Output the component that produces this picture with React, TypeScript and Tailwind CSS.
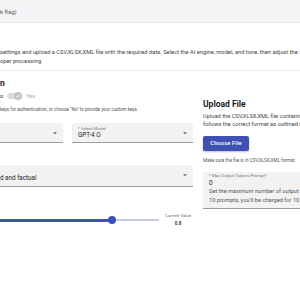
const ArrowDrop = () => (
  <svg viewBox="0 0 24 24" className="w-[10px] h-[10px] fill-[#6b6b6b]">
    <path d="M7 10l5 5 5-5z" />
  </svg>
);

const Toggle = () => (
  <div className="relative w-[15px] h-[6px] rounded-full bg-[#dcdcdc]">
    <div className="absolute -top-[1px] right-0 w-[8px] h-[8px] rounded-full bg-[#c4c4c4] flex items-center justify-center">
      <svg viewBox="0 0 24 24" className="w-[6px] h-[6px] fill-none stroke-white stroke-[3]">
        <path d="M5 12l5 5 9-10" />
      </svg>
    </div>
  </div>
);

export default function App() {
  return (
    <div className="w-[300px] h-[300px] overflow-hidden bg-white font-['Roboto',sans-serif] text-[#222]">
      <header className="h-[23px] bg-[#f5f5f7] border-b border-[#ececec] flex items-center text-[6px] text-[#555] whitespace-nowrap">
        k flag)
      </header>

      <section className="h-[48px] border-b border-[#ededed] pt-[25px] text-[5.75px] leading-[9px] text-[#444] whitespace-nowrap">
        <p>
          settings and upload a CSV,XLSX,XML file with the required data. Select the AI engine, model, and tone, then
          adjust the settings
        </p>
        <p>oper processing.</p>
      </section>

      <div className="flex">
        <div className="w-[193px] shrink-0">
          <h2 className="mt-[7px] text-[8.5px] leading-[10px] font-bold">n</h2>
          <div className="mt-[3px] h-[10px] flex items-center gap-[3px] text-[5.5px]">
            <span className="text-[#333]">s:</span>
            <Toggle />
            <span className="text-[#aaa] ml-[1px]">Yes</span>
          </div>
          <p className="mt-[5px] text-[4.6px] leading-[7px] text-[#555] whitespace-nowrap">
            keys for authentication, or choose "No" to provide your custom keys.
          </p>

          <div className="mt-[10px] flex gap-[9px]">
            <div className="w-[63px] h-[20px] bg-[#f2f2f2] border-b border-[#9e9e9e] rounded-t-[2px] flex items-center justify-end pr-[3px]">
              <ArrowDrop />
            </div>
            <div className="flex-1 h-[20px] bg-[#f2f2f2] border-b border-[#9e9e9e] rounded-t-[2px] flex items-center pl-[6px] pr-[3px]">
              <div className="flex-1">
                <div className="text-[4.3px] leading-[5px] text-[#777]">
                  <span className="text-[#d32f2f]">*</span> Select Model
                </div>
                <div className="text-[6.3px] leading-[8px] text-[#222]">GPT-4 O</div>
              </div>
              <ArrowDrop />
            </div>
          </div>

          <div className="mt-[22px] h-[22px] bg-[#f2f2f2] border-b border-[#9e9e9e] rounded-t-[2px] flex items-end pb-[4px] pr-[3px]">
            <span className="flex-1 text-[6.3px] leading-[8px] text-[#222]">d and factual</span>
            <span className="mb-[2px]">
              <ArrowDrop />
            </span>
          </div>

          <div className="mt-[25px] flex items-center">
            <div className="relative w-[160px] h-[8px] flex items-center">
              <div className="w-[112px] h-[3px] bg-[#3f51b5]" />
              <div className="flex-1 h-[2px] bg-[#c5cae9]" />
              <div className="absolute left-[108px] top-0 w-[8px] h-[8px] rounded-full bg-[#3f51b5]" />
            </div>
            <div className="ml-[4px] w-[30px] text-center">
              <div className="text-[4.3px] leading-[8px] text-[#666]">Current Value</div>
              <div className="text-[4.5px] leading-[8px] font-bold text-[#333]">0.8</div>
            </div>
          </div>
        </div>

        <div className="ml-[10px] w-[160px] shrink-0 whitespace-nowrap">
          <h2 className="mt-[28px] text-[8.5px] leading-[10px] font-bold">Upload File</h2>
          <div className="mt-[3px] text-[5.7px] leading-[8px] text-[#444]">
            <p>Upload the CSV,XLSX,XML file containing the data. Ensure it</p>
            <p>follows the correct format as outlined in the guide.</p>
          </div>
          <button className="mt-[4px] w-[46px] h-[15px] rounded-[2px] bg-[#3f51b5] text-white text-[5.8px] font-medium tracking-[0.1px] shadow-[0_1px_2px_rgba(0,0,0,0.25)]">
            Choose File
          </button>
          <p className="mt-[5px] text-[4.6px] leading-[7px] text-[#555]">
            Make sure the file is in CSV,XLSX,XML format.
          </p>
          <div className="mt-[8px] bg-[#f2f2f2] border-b border-[#9e9e9e] rounded-t-[2px] pl-[6px] pt-[1px] pb-[3px]">
            <div className="text-[4.3px] leading-[6px] text-[#777]">
              <span className="text-[#d32f2f]">*</span> Max Output Tokens/Prompt*
            </div>
            <div className="text-[6.3px] leading-[8px] text-[#222]">0</div>
            <div className="text-[5.7px] leading-[9px] text-[#555]">
              <p>Set the maximum number of output tokens per prompt.</p>
              <p>10 prompts, you'll be charged for 10 x tokens.</p>
            </div>
          </div>
        </div>
      </div>
    </div>
  );
}
